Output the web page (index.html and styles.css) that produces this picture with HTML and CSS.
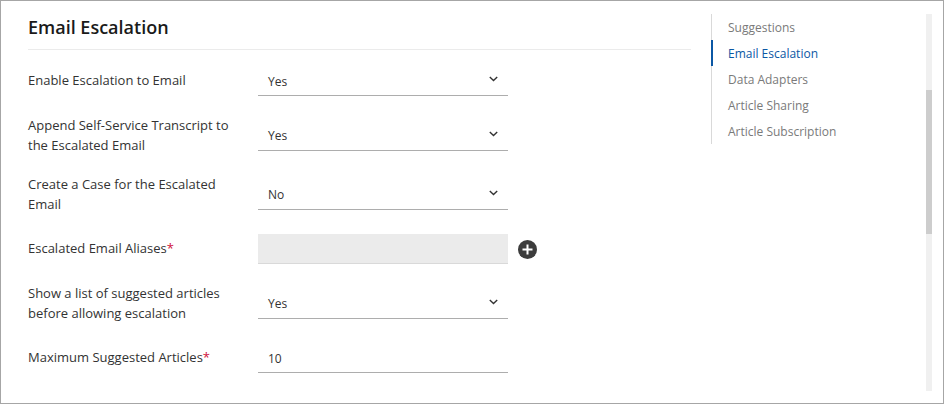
FILE: index.html
```html
<!DOCTYPE html>
<html lang="en">
<head>
<meta charset="utf-8">
<title>Email Escalation</title>
<link rel="stylesheet" href="styles.css">
</head>
<body>
<div class="frame">
  <main class="main">
    <h1 class="title">Email Escalation</h1>
    <form class="form">
      <div class="row">
        <div class="label-cell"><label class="label">Enable Escalation to Email</label></div>
        <div class="field"><span class="value value-low">Yes</span><svg class="chev" viewBox="0 0 9 6"><path d="M.8 1 4.5 4.6 8.2 1"/></svg></div>
      </div>
      <div class="row row-tall row-spaced">
        <div class="label-cell"><label class="label">Append Self-Service Transcript to the Escalated Email</label></div>
        <div class="field"><span class="value">Yes</span><svg class="chev" viewBox="0 0 9 6"><path d="M.8 1 4.5 4.6 8.2 1"/></svg></div>
      </div>
      <div class="row row-tall">
        <div class="label-cell"><label class="label">Create a Case for the Escalated Email</label></div>
        <div class="field"><span class="value">No</span><svg class="chev" viewBox="0 0 9 6"><path d="M.8 1 4.5 4.6 8.2 1"/></svg></div>
      </div>
      <div class="row">
        <div class="label-cell"><label class="label">Escalated Email Aliases<span class="req">*</span></label></div>
        <div class="field field-disabled"></div>
        <svg class="add" viewBox="0 0 19 19"><circle cx="9.5" cy="9.5" r="9.5"/><path d="M9.5 4.5v10M4.5 9.5h10"/></svg>
      </div>
      <div class="row row-tall row-spaced">
        <div class="label-cell"><label class="label">Show a list of suggested articles before allowing escalation</label></div>
        <div class="field"><span class="value">Yes</span><svg class="chev" viewBox="0 0 9 6"><path d="M.8 1 4.5 4.6 8.2 1"/></svg></div>
      </div>
      <div class="row">
        <div class="label-cell"><label class="label">Maximum Suggested Articles<span class="req">*</span></label></div>
        <div class="field"><span class="value value-low">10</span></div>
      </div>
    </form>
  </main>
  <nav class="nav">
    <a class="nav-item">Suggestions</a>
    <a class="nav-item active">Email Escalation</a>
    <a class="nav-item">Data Adapters</a>
    <a class="nav-item">Article Sharing</a>
    <a class="nav-item">Article Subscription</a>
  </nav>
  <div class="track"><div class="thumb"></div></div>
</div>
</body>
</html>
```
FILE: styles.css
```css
* { box-sizing: border-box; }
html, body { margin: 0; padding: 0; }
body { font-family: "Open Sans", sans-serif; background: #fff; overflow: hidden; }
.frame {
  width: 944px;
  height: 404px;
  border: 1px solid #a6a6a6;
  display: flex;
  align-items: flex-start;
  background: #fff;
}
.main { width: 663px; margin-left: 27px; flex: none; }
.title {
  margin: 0;
  height: 49px;
  padding-top: 13px;
  font-size: 18px;
  line-height: 26px;
  font-weight: 600;
  color: #1a1a1a;
  border-bottom: 1px solid #ebebeb;
}
.form { display: flex; flex-direction: column; gap: 19px; padding-top: 16px; }
.row { display: flex; align-items: center; min-height: 30px; }
.row-tall { min-height: 40px; }
.row-spaced { margin-top: 1px; }
.label-cell { width: 230px; flex: none; padding-right: 24px; margin-top: -2px; }
.label {
  display: block;
  font-size: 13px;
  line-height: 20px;
  color: #333;
}
.req { color: #d0103a; }
.field {
  width: 250px;
  height: 30px;
  flex: none;
  padding: 0 10px;
  display: flex;
  align-items: center;
  justify-content: space-between;
  font-size: 12px;
  color: #333;
  border-bottom: 1px solid #adadad;
}
.value-low { padding-top: 2px; }
.field-disabled { background: #ebebeb; border-bottom-color: #d9d9d9; }
.chev { width: 9px; height: 6px; fill: none; stroke: #333; stroke-width: 1.4; margin-top: -3px; }
.add { width: 19px; height: 19px; margin-left: 10px; flex: none; }
.add circle { fill: #3c3c3c; }
.add path { fill: none; stroke: #fff; stroke-width: 2; }
.nav {
  width: 203px;
  margin-left: 20px;
  margin-top: 13px;
  flex: none;
  border-left: 1px solid #d9d9d9;
  display: flex;
  flex-direction: column;
}
.nav-item {
  height: 26px;
  line-height: 26px;
  padding-top: 1px;
  padding-left: 16px;
  font-size: 12px;
  color: #7a7a7a;
}
.nav-item.active {
  color: #0b57a4;
  box-shadow: -1px 0 0 0 #0b57a4, inset 1px 0 0 0 #0b57a4;
}
.track {
  width: 6px;
  height: 377px;
  margin-top: 13px;
  margin-left: 12px;
  flex: none;
  background: #f0f0f0;
  padding-top: 76px;
}
.thumb { height: 144px; background: #cdcdcd; }
```
